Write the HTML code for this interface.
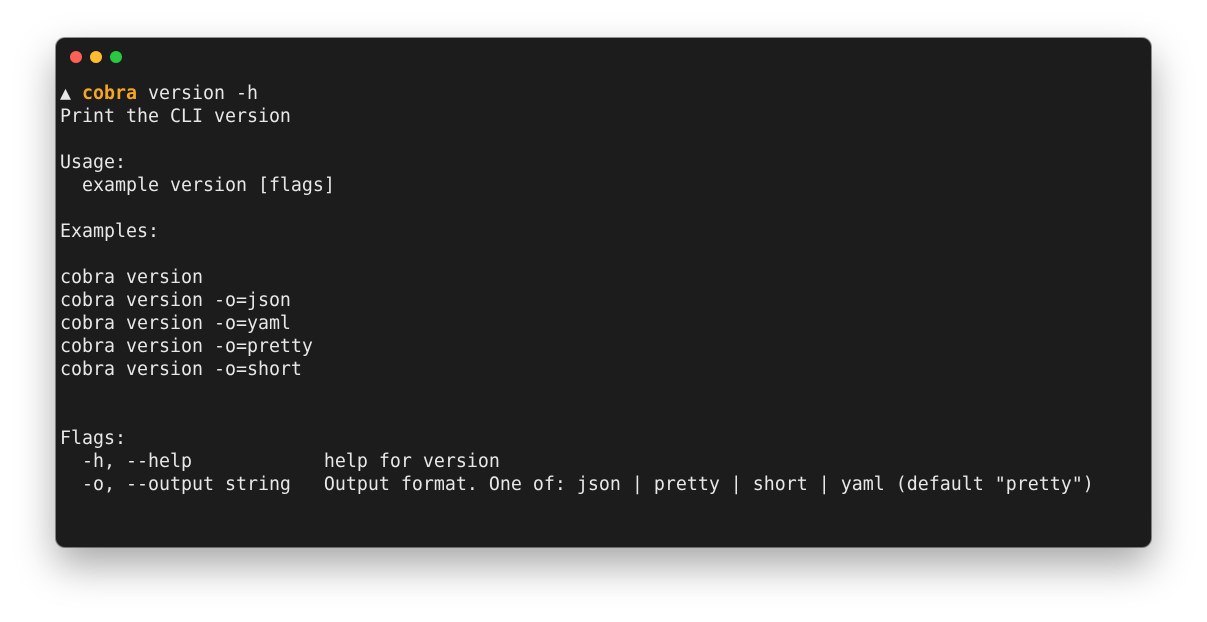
<!DOCTYPE html>
<html><head><meta charset="utf-8"><style>
html,body{margin:0;padding:0;background:#fff;width:1207px;height:622px;overflow:hidden}
.win{position:absolute;left:56px;top:38px;width:1095px;height:509px;background:#1c1c1c;border-radius:9px;box-shadow:0 18px 40px rgba(0,0,0,0.35),0 0 0 1px rgba(0,0,0,0.4)}
.dot{position:absolute;top:13px;width:12px;height:12px;border-radius:50%}
pre{position:absolute;left:4px;top:44px;margin:0;font-family:"DejaVu Sans Mono","Liberation Mono",monospace;font-size:18.27px;line-height:23px;color:#e8e8e8}
b{color:#f5a623}
</style></head><body>
<div class="win">
<div class="dot" style="left:14px;background:#fe5f57"></div>
<div class="dot" style="left:34px;background:#febc2e"></div>
<div class="dot" style="left:54px;background:#28c840"></div>
<pre>▲ <b>cobra</b> version -h
Print the CLI version

Usage:
  example version [flags]

Examples:

cobra version
cobra version -o=json
cobra version -o=yaml
cobra version -o=pretty
cobra version -o=short


Flags:
  -h, --help            help for version
  -o, --output string   Output format. One of: json | pretty | short | yaml (default "pretty")
</pre>
</div>
</body></html>
